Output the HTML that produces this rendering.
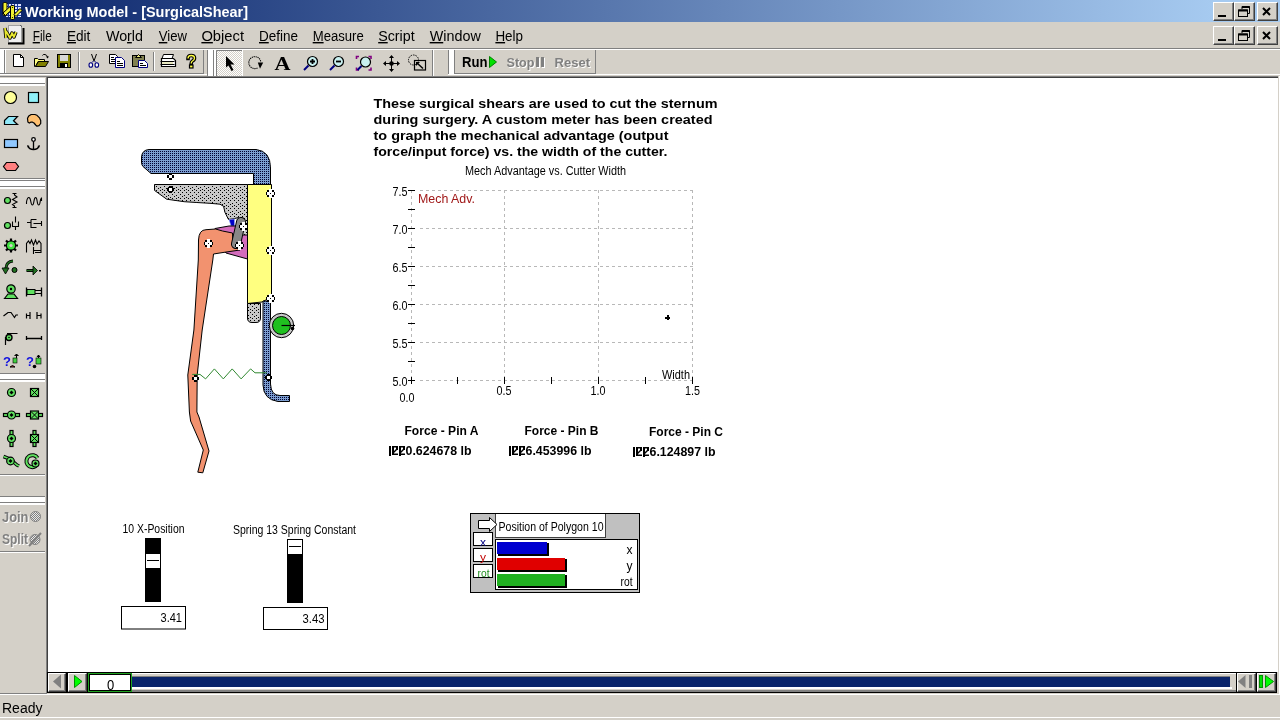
<!DOCTYPE html>
<html><head><meta charset="utf-8">
<style>
*{margin:0;padding:0;box-sizing:border-box}
html,body{width:1280px;height:720px;overflow:hidden;background:#d4d0c8;font-family:"Liberation Sans",sans-serif;color:#000}
.a{position:absolute}
.t{position:absolute;white-space:pre;line-height:1}
#title{left:0;top:0;width:1280px;height:22px;background:linear-gradient(to right,#0a246a 0px,#a6caf0 1212px,#a6caf0 1280px)}
.btn{position:absolute;background:#d4d0c8;border-top:1px solid #fff;border-left:1px solid #fff;border-right:1px solid #404040;border-bottom:1px solid #404040;box-shadow:inset -1px -1px 0 #808080}
.menu{position:absolute;top:29px;font-size:14px;line-height:14px;white-space:pre}
.u{text-decoration:underline}
.hl{position:absolute;height:1px}
.vl{position:absolute;width:1px}
</style></head><body><div style="position:absolute;left:0;top:0;width:1280px;height:720px;will-change:transform">

<!-- TITLE BAR -->
<div id="title" class="a"></div>
<svg class="a" style="left:0;top:0" width="24" height="22" viewBox="0 0 24 22">
  <rect x="6" y="4" width="15" height="13" fill="#e0e4ff"/>
  <g stroke="#1a3aa0" stroke-width="1"><path d="M6 6.5 H21 M6 9.5 H21 M6 12.5 H21 M6 15.5 H21 M8.5 4 V17 M11.5 4 V17 M14.5 4 V17 M17.5 4 V17"/></g>
  <g fill="#f0f030" stroke="#000" stroke-width="1" stroke-linejoin="round">
   <rect x="3" y="2.5" width="4" height="13" rx="1.2"/>
   <path d="M3 13 L9.5 7 L12 9.5 L5.5 15.5 Z"/>
   <rect x="10.5" y="5.5" width="4" height="14" rx="1.2"/>
   <path d="M14 14.5 L20 8.5 L22 10.5 L16 16.5 Z"/>
  </g>
  <circle cx="12.5" cy="7.5" r="0.6" fill="#000"/><circle cx="12.5" cy="17.5" r="0.6" fill="#000"/>
</svg>
<svg class="a" style="left:0;top:0" width="300" height="22"><text x="25" y="17" font-family="Liberation Sans" font-weight="bold" font-size="14" fill="#fff" textLength="223" lengthAdjust="spacingAndGlyphs">Working Model - [SurgicalShear]</text></svg>
<div class="btn" style="left:1213px;top:2px;width:21px;height:19px"></div>
<div class="btn" style="left:1234px;top:2px;width:21px;height:19px"></div>
<div class="btn" style="left:1257px;top:2px;width:21px;height:19px"></div>

<!-- title glyphs -->
<div class="a" style="left:1218px;top:15px;width:8px;height:2px;background:#000"></div>
<svg class="a" style="left:1237px;top:5px" width="14" height="13" viewBox="0 0 14 13">
 <path d="M5 1.5 H12.5 V8.5 H10.5" fill="none" stroke="#000" stroke-width="1"/><line x1="5" y1="2" x2="12.5" y2="2" stroke="#000" stroke-width="2"/>
 <path d="M5 1.5 V4" fill="none" stroke="#000" stroke-width="1"/>
 <rect x="1.5" y="5" width="9" height="6.5" fill="none" stroke="#000" stroke-width="1"/><line x1="1.5" y1="5.5" x2="10.5" y2="5.5" stroke="#000" stroke-width="2"/>
</svg>
<svg class="a" style="left:1260px;top:6px" width="14" height="12" viewBox="0 0 14 12">
 <path d="M3 2 L10 9 M10 2 L3 9" stroke="#000" stroke-width="2"/>
</svg>

<!-- MENU BAR -->
<svg class="a" style="left:0;top:22px" width="26" height="26" viewBox="0 22 26 26">
 <rect x="8.5" y="25.5" width="13" height="17" fill="#f0f0f0" stroke="#a0a0a0"/>
 <path d="M8 43.5 H23.5 V28" fill="none" stroke="#000" stroke-width="2"/>
 <path d="M20 25 L22 27" stroke="#606060" stroke-width="1"/>
 <path d="M5 28 L6 38 M6 31 L10 38 L12 33 L14 37 L16 32" fill="none" stroke="#000" stroke-width="3.4" stroke-linejoin="round"/>
 <path d="M5 28 L6 38 M6 31 L10 38 L12 33 L14 37 L16 32" fill="none" stroke="#e8e830" stroke-width="1.8" stroke-linejoin="round"/>
</svg>
<svg class="a" style="left:0;top:22px" width="560" height="26" viewBox="0 22 560 26"><g font-family="Liberation Sans" font-size="14" fill="#000">
 <text x="32.7" y="41" textLength="19.0" lengthAdjust="spacingAndGlyphs"><tspan text-decoration="underline">F</tspan>ile</text>
 <text x="66.9" y="41" textLength="23.5" lengthAdjust="spacingAndGlyphs"><tspan text-decoration="underline">E</tspan>dit</text>
 <text x="105.9" y="41" textLength="37.1" lengthAdjust="spacingAndGlyphs">Wo<tspan text-decoration="underline">r</tspan>ld</text>
 <text x="158.8" y="41" textLength="28.2" lengthAdjust="spacingAndGlyphs"><tspan text-decoration="underline">V</tspan>iew</text>
 <text x="201.4" y="41" textLength="42.6" lengthAdjust="spacingAndGlyphs"><tspan text-decoration="underline">O</tspan>bject</text>
 <text x="259.0" y="41" textLength="39.0" lengthAdjust="spacingAndGlyphs"><tspan text-decoration="underline">D</tspan>efine</text>
 <text x="312.7" y="41" textLength="51.0" lengthAdjust="spacingAndGlyphs"><tspan text-decoration="underline">M</tspan>easure</text>
 <text x="378.2" y="41" textLength="36.5" lengthAdjust="spacingAndGlyphs"><tspan text-decoration="underline">S</tspan>cript</text>
 <text x="429.7" y="41" textLength="51.1" lengthAdjust="spacingAndGlyphs"><tspan text-decoration="underline">W</tspan>indow</text>
 <text x="495.4" y="41" textLength="27.6" lengthAdjust="spacingAndGlyphs"><tspan text-decoration="underline">H</tspan>elp</text>
</g></svg>
<div class="btn" style="left:1213px;top:26px;width:21px;height:19px"></div>
<div class="btn" style="left:1234px;top:26px;width:21px;height:19px"></div>
<div class="btn" style="left:1257px;top:26px;width:21px;height:19px"></div>
<div class="a" style="left:1218px;top:39px;width:8px;height:2px;background:#000"></div>
<svg class="a" style="left:1237px;top:29px" width="14" height="13" viewBox="0 0 14 13">
 <path d="M5 1.5 H12.5 V8.5 H10.5" fill="none" stroke="#000" stroke-width="1"/><line x1="5" y1="2" x2="12.5" y2="2" stroke="#000" stroke-width="2"/>
 <path d="M5 1.5 V4" fill="none" stroke="#000" stroke-width="1"/>
 <rect x="1.5" y="5" width="9" height="6.5" fill="none" stroke="#000" stroke-width="1"/><line x1="1.5" y1="5.5" x2="10.5" y2="5.5" stroke="#000" stroke-width="2"/>
</svg>
<svg class="a" style="left:1260px;top:30px" width="14" height="12" viewBox="0 0 14 12">
 <path d="M3 2 L10 9 M10 2 L3 9" stroke="#000" stroke-width="2"/>
</svg>

<!-- separator lines below menu -->
<div class="hl" style="left:0;top:48px;width:1280px;background:#808080"></div>
<div class="hl" style="left:0;top:49px;width:1280px;background:#fff"></div>

<!-- TOOLBAR AREA -->
<div class="a" style="left:0;top:50px;width:4px;height:23px;background:#fff"></div>
<div class="vl" style="left:4px;top:50px;height:24px;background:#808080"></div>
<div class="vl" style="left:5px;top:50px;height:24px;background:#fff"></div>
<div class="vl" style="left:203px;top:50px;height:24px;background:#808080"></div>
<div class="hl" style="left:0;top:73px;width:204px;background:#808080"></div>
<div class="hl" style="left:0;top:74px;width:207px;background:#fff"></div>
<div class="vl" style="left:207px;top:50px;height:26px;background:#808080"></div>
<div class="a" style="left:208px;top:50px;width:5px;height:26px;background:#fff"></div>
<div class="vl" style="left:213px;top:50px;height:26px;background:#808080"></div>
<div class="a" style="left:214px;top:50px;width:2px;height:26px;background:#fff"></div>
<div class="vl" style="left:432px;top:50px;height:26px;background:#808080"></div>
<div class="vl" style="left:433px;top:50px;height:26px;background:#fff"></div>
<div class="hl" style="left:214px;top:76px;width:219px;background:#808080"></div>
<div class="vl" style="left:448px;top:50px;height:24px;background:#808080"></div>
<div class="a" style="left:449px;top:50px;width:5px;height:24px;background:#fff"></div>
<div class="vl" style="left:454px;top:50px;height:24px;background:#808080"></div>
<div class="vl" style="left:595px;top:50px;height:24px;background:#808080"></div>
<div class="hl" style="left:455px;top:73px;width:141px;background:#808080"></div>
<div class="hl" style="left:448px;top:74px;width:832px;background:#fff"></div>
<div class="hl" style="left:0;top:76px;width:1280px;background:#808080"></div>
<div class="hl" style="left:48px;top:77px;width:1230px;background:#404040"></div>

<!-- toolbar separators -->
<div class="vl" style="left:78px;top:52px;height:19px;background:#808080"></div>
<div class="vl" style="left:79px;top:52px;height:19px;background:#fff"></div>
<div class="vl" style="left:153px;top:52px;height:19px;background:#808080"></div>
<div class="vl" style="left:154px;top:52px;height:19px;background:#fff"></div>

<!-- TOOLBAR ICONS -->
<svg class="a" style="left:0;top:0" width="600" height="80" viewBox="0 0 600 80">
 <!-- new -->
 <path d="M13.5 54.5 H20.5 L23.5 57.5 V66.5 H13.5 Z" fill="#fff" stroke="#000" stroke-width="1"/>
 <path d="M20.5 54.5 V57.5 H23.5" fill="none" stroke="#000" stroke-width="1"/>
 <!-- open -->
 <path d="M34.5 58.5 H37.5 L38.5 59.5 H44.5 V61.5 H38 L35.5 66.5 H34.5 Z" fill="#ffff80" stroke="#000" stroke-width="1"/>
 <path d="M35.5 66.5 L38.5 61.5 H48.5 L45.5 66.5 Z" fill="#808000" stroke="#000" stroke-width="1"/>
 <path d="M42.5 55.5 Q43 54 45 54.5 Q47 55 47.5 57" fill="none" stroke="#000" stroke-width="1"/>
 <path d="M46 56.5 H49 L47.5 58.5 Z" fill="#000"/>
 <!-- save -->
 <rect x="57.5" y="54.5" width="13" height="13" fill="#808000" stroke="#000" stroke-width="1"/>
 <rect x="60" y="55" width="8" height="6" fill="#d8d8d8"/>
 <rect x="60" y="63" width="8" height="4" fill="#000"/><rect x="65" y="64" width="2" height="3" fill="#fff"/>
 <!-- cut -->
 <path d="M91.5 54 L94 61 M96.5 54 L94 61" fill="none" stroke="#000" stroke-width="1"/>
 <ellipse cx="90.8" cy="65" rx="1.8" ry="2.3" fill="#fff" stroke="#000080" stroke-width="1.1"/>
 <ellipse cx="96.8" cy="65" rx="1.8" ry="2.3" fill="#fff" stroke="#000080" stroke-width="1.1"/>
 <path d="M93.5 61 L92 62.5 M94.5 61 L96 62.5" stroke="#000080" stroke-width="1"/>
 <!-- copy -->
 <path d="M109.5 54.5 H115.5 L117.5 56.5 V63.5 H109.5 Z" fill="#fff" stroke="#000" stroke-width="1"/>
 <path d="M111 57.5 H114 M111 59.5 H115 M111 61.5 H115" stroke="#000" stroke-width="1"/>
 <path d="M115.5 57.5 H121.5 L124.5 60.5 V67.5 H115.5 Z" fill="#fff" stroke="#000080" stroke-width="1"/>
 <path d="M117 61.5 H120 M117 63.5 H123 M117 65.5 H123" stroke="#000" stroke-width="1"/>
 <!-- paste -->
 <rect x="132.5" y="55.5" width="12" height="11" fill="#808050" stroke="#000" stroke-width="1"/>
 <path d="M135.5 57.5 L138.5 54.5 L141.5 57.5 Z" fill="#e8e880" stroke="#000" stroke-width="1"/>
 <path d="M138.5 60.5 H144.5 L147.5 63.5 V67.5 H138.5 Z" fill="#fff" stroke="#000080" stroke-width="1"/>
 <path d="M140 63.5 H143 M140 65.5 H146" stroke="#000" stroke-width="1"/>
 <!-- print -->
 <path d="M163.5 54.5 H173.5 L172 58.5 H162 Z" fill="#fff" stroke="#000" stroke-width="1"/>
 <path d="M161.5 58.5 H173.5 L175.5 60.5 V66.5 H161.5 Z" fill="#fff" stroke="#000" stroke-width="1.2"/>
 <path d="M160.5 61.5 H174.5 M160.5 64.5 H174.5" stroke="#000" stroke-width="1"/>
 <rect x="162" y="62" width="11" height="2" fill="#e8e8c0"/>
 <!-- help -->
 <path d="M188 58.5 Q188 55.5 191.2 55.5 Q194.5 55.5 194.5 58 Q194.5 60 192.5 61 Q191.2 61.8 191.2 63.5" fill="none" stroke="#000" stroke-width="3.6" stroke-linecap="square"/>
 <path d="M188 58.5 Q188 55.5 191.2 55.5 Q194.5 55.5 194.5 58 Q194.5 60 192.5 61 Q191.2 61.8 191.2 63.5" fill="none" stroke="#ffff40" stroke-width="1.3"/>
 <rect x="189.5" y="65" width="3.5" height="3" fill="#ffff40" stroke="#000" stroke-width="1.2"/>

 <!-- pressed arrow button -->
 <defs><pattern id="dith" width="2" height="2" patternUnits="userSpaceOnUse"><rect width="2" height="2" fill="#fff"/><rect width="1" height="1" fill="#d4d0c8"/><rect x="1" y="1" width="1" height="1" fill="#d4d0c8"/></pattern></defs>
 <rect x="216" y="50" width="26" height="26" fill="url(#dith)"/>
 <path d="M216.5 76 V50.5 H242" fill="none" stroke="#808080" stroke-width="1"/>
 <path d="M242.5 50 V76" stroke="#fff" stroke-width="1"/>
 <path d="M226 56 V67.5 L228.5 65.5 L231.5 71 L233.5 70 L230.5 64.5 L234.5 64.5 Z" fill="#000"/>
 <!-- rotate -->
 <path d="M257.5 68 A6 6 0 1 1 260.8 62" fill="none" stroke="#000" stroke-width="1.1" stroke-dasharray="1.2,0.8"/>
 <path d="M257.8 62.5 H263.2 L260 68.8 Z" fill="#000"/>
 <!-- A -->
 <text x="274.5" y="70" font-family="Liberation Serif" font-weight="bold" font-size="19" textLength="16" lengthAdjust="spacingAndGlyphs">A</text>
 <!-- zoom in -->
 <circle cx="312.5" cy="61.5" r="5" fill="#c8f0f0" stroke="#000" stroke-width="1.2"/>
 <path d="M310 61.5 H315 M312.5 59 V64" stroke="#000" stroke-width="1.8"/>
 <line x1="308.5" y1="65.5" x2="304" y2="70" stroke="#000080" stroke-width="2"/>
 <!-- zoom out -->
 <circle cx="338.5" cy="61.5" r="5" fill="#c8f0f0" stroke="#000" stroke-width="1.2"/>
 <path d="M336 61.5 H341" stroke="#000" stroke-width="1.8"/>
 <line x1="334.5" y1="65.5" x2="330" y2="70" stroke="#000080" stroke-width="2"/>
 <!-- zoom fit -->
 <path d="M356.5 59 V56.5 H359 M368.5 56.5 H371 V59 M371 67.5 V70 H368.5 M359 70 H356.5 V67.5" fill="none" stroke="#800080" stroke-width="1.6"/>
 <circle cx="365.5" cy="62" r="5" fill="#c8f0f0" stroke="#000" stroke-width="1.2"/>
 <line x1="361.5" y1="66" x2="357.5" y2="70" stroke="#000080" stroke-width="2"/>
 <!-- move -->
 <circle cx="391.5" cy="63.5" r="2.3" fill="#000"/>
 <path d="M391.5 56 V71 M384 63.5 H399" stroke="#000" stroke-width="1"/>
 <path d="M391.5 55 L389 58 H394 Z M391.5 72 L389 69 H394 Z M383 63.5 L386 61 V66 Z M400 63.5 L397 61 V66 Z" fill="#000"/>
 <!-- select region -->
 <circle cx="413.5" cy="60" r="5" fill="none" stroke="#000" stroke-width="1" stroke-dasharray="1.5,1"/>
 <rect x="414.5" y="60.5" width="11" height="9.5" fill="none" stroke="#000" stroke-width="1.2"/>
 <path d="M417 63 L423 68.5" stroke="#000" stroke-width="1.5"/><path d="M416 62 H420 L416 66 Z" fill="#000"/>

 <!-- run stop reset -->
 <text x="462" y="66.7" font-family="Liberation Sans" font-weight="bold" font-size="14" textLength="25.5" lengthAdjust="spacingAndGlyphs">Run</text>
 <path d="M489.5 56.5 L496.5 62 L489.5 67.5 Z" fill="#00e000" stroke="#008000" stroke-width="1"/>
 <g font-family="Liberation Sans" font-weight="bold" font-size="13.5">
 <text x="507.5" y="67.7" fill="#fff" textLength="28" lengthAdjust="spacingAndGlyphs">Stop</text>
 <rect x="537" y="58" width="3" height="10" fill="#fff"/><rect x="542" y="58" width="3" height="10" fill="#fff"/>
 <text x="555.5" y="67.7" fill="#fff" textLength="35.5" lengthAdjust="spacingAndGlyphs">Reset</text>
 <text x="506.5" y="66.7" fill="#808080" textLength="28" lengthAdjust="spacingAndGlyphs">Stop</text>
 <rect x="536" y="57" width="3" height="10" fill="#808080"/><rect x="541" y="57" width="3" height="10" fill="#808080"/>
 <text x="554.5" y="66.7" fill="#808080" textLength="35.5" lengthAdjust="spacingAndGlyphs">Reset</text>
 </g>
</svg>

<!-- LEFT PALETTE -->
<div class="a" style="left:0;top:78px;width:45px;height:5px;background:#fff"></div>
<div class="hl" style="left:0;top:83px;width:45px;background:#808080"></div>
<div class="hl" style="left:0;top:84px;width:45px;height:2px;background:#fff"></div>
<div class="hl" style="left:0;top:178px;width:45px;background:#808080"></div>
<div class="hl" style="left:0;top:179px;width:45px;background:#fff"></div>
<div class="hl" style="left:0;top:180px;width:45px;background:#808080"></div>
<div class="a" style="left:0;top:181px;width:45px;height:5px;background:#fff"></div>
<div class="hl" style="left:0;top:186px;width:45px;background:#808080"></div>
<div class="a" style="left:0;top:187px;width:45px;height:2px;background:#fff"></div>
<div class="hl" style="left:0;top:373px;width:45px;background:#808080"></div>
<div class="a" style="left:0;top:374px;width:45px;height:5px;background:#fff"></div>
<div class="hl" style="left:0;top:379px;width:45px;background:#808080"></div>
<div class="a" style="left:0;top:380px;width:45px;height:2px;background:#fff"></div>
<div class="hl" style="left:0;top:474px;width:45px;background:#808080"></div>
<div class="hl" style="left:0;top:475px;width:45px;background:#fff"></div>
<div class="hl" style="left:0;top:496px;width:45px;background:#808080"></div>
<div class="a" style="left:0;top:497px;width:45px;height:5px;background:#fff"></div>
<div class="hl" style="left:0;top:502px;width:45px;background:#808080"></div>
<div class="a" style="left:0;top:503px;width:45px;height:2px;background:#fff"></div>
<div class="hl" style="left:0;top:551px;width:45px;background:#808080"></div>
<div class="hl" style="left:0;top:552px;width:45px;background:#fff"></div>
<div class="hl" style="left:0;top:693px;width:46px;background:#808080"></div>
<div class="vl" style="left:46px;top:77px;height:617px;background:#808080"></div>
<div class="vl" style="left:47px;top:77px;height:596px;background:#404040"></div>
<svg class="a" style="left:0;top:500px" width="46" height="52" viewBox="0 500 46 52"><g font-family="Liberation Sans" font-weight="bold" font-size="14">
<text x="3" y="523" fill="#fff" textLength="26.5" lengthAdjust="spacingAndGlyphs">Join</text>
<text x="3" y="545" fill="#fff" textLength="26" lengthAdjust="spacingAndGlyphs">Split</text>
<text x="2" y="522" fill="#808080" textLength="26.5" lengthAdjust="spacingAndGlyphs">Join</text>
<text x="2" y="544" fill="#808080" textLength="26" lengthAdjust="spacingAndGlyphs">Split</text></g></svg>

<!-- PALETTE ICONS -->
<svg class="a" style="left:0;top:78px" width="46" height="480" viewBox="0 78 46 480">
 <defs><pattern id="dg" width="2" height="2" patternUnits="userSpaceOnUse"><rect width="2" height="2" fill="#e8e8e8"/><rect width="1" height="1" fill="#808080"/><rect x="1" y="1" width="1" height="1" fill="#808080"/></pattern></defs>
 <g stroke="#000" stroke-width="1.2">
  <circle cx="10.5" cy="97.5" r="6" fill="#ffff99"/>
  <rect x="28.5" y="92.5" width="10" height="10" fill="#90f0f8"/>
  <path d="M4.5 120.5 L8.5 116.5 H17.5 L13.5 120.8 L17.5 124.5 H4.5 Z" fill="#90e8f8"/>
  <path d="M31.2 114.5 H34.8 L37 115.3 L39.5 117.8 L40.7 120.5 V123.5 L39 125.7 L37 126.2 L35.7 125 L34 123 L32.6 122.2 H30.7 L29.3 123.1 L27.9 122 L27.5 118.3 L28.7 116.1 Z" fill="#ffc070" stroke-linejoin="round"/>
  <rect x="4.5" y="139.5" width="13" height="8" fill="#90c8ff"/>
  <path d="M6.5 162.5 H15.5 L18.5 166.5 L15.5 170.5 H6.5 L3.5 166.5 Z" fill="#ff8080"/>
 </g>
 <circle cx="33.5" cy="139.5" r="1.8" fill="#fff" stroke="#000" stroke-width="1.3"/>
 <path d="M33.5 141.5 V149" stroke="#000" stroke-width="1.3"/>
 <path d="M28 146 Q29 149.5 33.5 149.5 Q38 149.5 39 146" fill="none" stroke="#000" stroke-width="1.3"/>
 <path d="M27 145 L29.5 146 L28 148 Z M40 145 L37.5 146 L39 148 Z" fill="#000"/>

 <!-- group 2 -->
 <g stroke="#000" stroke-width="1.1" fill="none">
  <path d="M12.5 193.5 H16.5 M14.5 193.5 V195 L17 197 L12.5 199.5 L17 202 L12.5 204.5 L14.5 206 V207.5 M12.5 207.5 H16.5"/>
  <path d="M26.5 204 V202 Q27.3 197.5 28.8 197.5 Q30.2 197.5 30.8 201.5 Q31.4 205 32.4 205 Q33.4 205 33.9 201.5 Q34.5 197.5 35.6 197.5 Q36.7 197.5 37.2 201.5 Q37.7 205 38.7 205 Q39.7 205 40.2 201.5 Q40.6 198.5 41.3 198.5 M41.5 197.5 V201"/>
  <path d="M15.5 216.5 V222.5 M12.5 221.5 V226.5 H18.5 V221.5 M15.5 226.5 V230"/>
  <path d="M27 222.5 H31 M31 219.5 H36.5 M31 219.5 V227.5 H36.5 M33.5 223.5 H41.5 M41.5 221 V226"/>
  <path d="M26.5 252.5 V243.5 L28.5 241 L30 243.5 L31.5 240 L33.5 245 L35.5 240 L37 244 L39 241 L41 243.5 V252.5 H35 M33.5 247 V254 M33.5 250.5 H41"/>
 </g>
 <circle cx="7.5" cy="200.5" r="3" fill="#60e060" stroke="#000" stroke-width="1.2"/>
 <circle cx="7.5" cy="225.5" r="3" fill="#60e060" stroke="#000" stroke-width="1.2"/>
 <g transform="translate(11 245.5)">
  <path d="M0 -7 V7 M-7 0 H7 M-5 -5 L5 5 M5 -5 L-5 5" stroke="#000" stroke-width="2.2"/>
  <circle r="4.6" fill="#40e040" stroke="#000" stroke-width="1.2"/>
  <circle r="1.6" fill="#d4d0c8"/>
 </g>
 <!-- motor -->
 <path d="M13 261 Q6.5 261.5 6 268 L5.5 271" fill="none" stroke="#000" stroke-width="3"/>
 <path d="M13 261 Q6.5 261.5 6 268 L5.5 271" fill="none" stroke="#207020" stroke-width="1.4"/>
 <path d="M2 268 H9 L5.5 274 Z" fill="#207020" stroke="#000" stroke-width="0.8"/>
 <circle cx="14.5" cy="270" r="2.5" fill="#207020" stroke="#000" stroke-width="1"/>
 <path d="M26.5 270.5 H34" stroke="#000" stroke-width="3"/><path d="M26.5 270.5 H34" stroke="#207020" stroke-width="1.2"/>
 <path d="M33 266 L37.5 270.5 L33 275 Z" fill="#207020" stroke="#000" stroke-width="0.8"/>
 <rect x="39" y="270" width="2" height="1.5" fill="#000"/>
 <!-- actuator -->
 <circle cx="11" cy="289" r="4.2" fill="#60e060" stroke="#000" stroke-width="1.2"/><circle cx="11" cy="289" r="1.2" fill="#000"/>
 <path d="M4.5 298.5 L8 294 H14 L17.5 298.5 Z" fill="#60e060" stroke="#000" stroke-width="1.2"/>
 <path d="M26.5 287.5 V296.5 M41.5 287.5 V296.5" stroke="#000" stroke-width="1.3"/>
 <rect x="27" y="289.5" width="8" height="5" fill="#60e060" stroke="#000" stroke-width="1"/>
 <path d="M35 290.5 H41 M35 293.5 H41" stroke="#000" stroke-width="1"/>
 <!-- rope / separators -->
 <path d="M3.5 316 L8 312.5 H11 L14.5 317.5 L16 315 H18" fill="none" stroke="#000" stroke-width="1.2"/>
 <path d="M26.5 313.5 V318.5 M26.5 315.5 H30 M30 312 V319 M37 312 V319 M37 315.5 H41 M41 313.5 V318.5" stroke="#000" stroke-width="1.2"/>
 <circle cx="9" cy="337.5" r="3" fill="#60e060" stroke="#000" stroke-width="1.4"/><circle cx="9" cy="337.5" r="0.8" fill="#000"/>
 <path d="M5.5 337 V345 M7 333.5 H17.5" stroke="#000" stroke-width="1.2"/>
 <path d="M26.5 336 V340 M26.5 338.5 H41.5 M41.5 336 V340" stroke="#000" stroke-width="1.3"/>
 <!-- ? icons -->
 <text x="3" y="366" font-family="Liberation Sans" font-weight="bold" font-size="13" fill="#1010e0">?</text>
 <text x="26" y="366" font-family="Liberation Sans" font-weight="bold" font-size="13" fill="#1010e0">?</text>
 <rect x="13" y="358" width="4" height="5" fill="#40d040" stroke="#000" stroke-width="0.6"/>
 <path d="M16.5 354 V358 M14.5 356 L16.5 354 L18.5 356" stroke="#000" stroke-width="1"/>
 <path d="M10 367 Q12.5 364 15 367 Z" fill="#c04040" stroke="#000" stroke-width="1"/>
 <rect x="36" y="358" width="5" height="6" fill="#40d040" stroke="#000" stroke-width="0.6"/>
 <path d="M38.5 355 V358 M37 357 L38.5 355 L40 357" stroke="#000" stroke-width="1"/>
 <circle cx="34.5" cy="366.5" r="1.8" fill="#000"/>

 <!-- group 3 -->
 <g stroke="#000" stroke-width="1.2">
  <g id="cd"><circle cx="11.5" cy="392.5" r="4" fill="#60e060"/><path d="M11.5 390.5 L13.5 392.5 L11.5 394.5 L9.5 392.5 Z" fill="#000" stroke="none"/></g>
  <rect x="30.5" y="388.5" width="8" height="8" fill="#60e060"/><path d="M31 389 L38 396 M38 389 L31 396" stroke-width="1"/>
  <rect x="3.5" y="413.5" width="16" height="3" fill="#60e060"/>
  <circle cx="11.5" cy="415" r="4" fill="#60e060"/><path d="M11.5 413 L13.5 415 L11.5 417 L9.5 415 Z" fill="#000" stroke="none"/>
  <rect x="26.5" y="413.5" width="16" height="3" fill="#60e060"/>
  <rect x="30.5" y="411" width="8" height="8" fill="#60e060"/><path d="M31 411.5 L38 418.5 M38 411.5 L31 418.5" stroke-width="1"/>
  <rect x="10" y="430.5" width="3" height="16" fill="#60e060"/>
  <circle cx="11.5" cy="438.5" r="4" fill="#60e060"/><path d="M11.5 436.5 L13.5 438.5 L11.5 440.5 L9.5 438.5 Z" fill="#000" stroke="none"/>
  <rect x="33" y="430.5" width="3" height="16" fill="#60e060"/>
  <rect x="30.5" y="434.5" width="8" height="8" fill="#60e060"/><path d="M31 435 L38 442 M38 435 L31 442" stroke-width="1"/>
 </g>
 <path d="M3.5 456.5 L10 459 L17 465 L19 466" fill="none" stroke="#000" stroke-width="3.5"/>
 <path d="M3.5 456.5 L10 459 L17 465 L19 466" fill="none" stroke="#60e060" stroke-width="1.5"/>
 <circle cx="10.5" cy="461" r="3.8" fill="#60e060" stroke="#000" stroke-width="1.2"/><path d="M10.5 459 L12.5 461 L10.5 463 L8.5 461 Z" fill="#000"/>
 <path d="M37.5 458 A6 6 0 1 0 36 466" fill="none" stroke="#000" stroke-width="4"/>
 <path d="M37.5 458 A6 6 0 1 0 36 466" fill="none" stroke="#60e060" stroke-width="2"/>
 <circle cx="35.5" cy="463.5" r="3.5" fill="#60e060" stroke="#000" stroke-width="1.2"/><path d="M35.5 461.5 L37.5 463.5 L35.5 465.5 L33.5 463.5 Z" fill="#000"/>

 <!-- join split icons -->
 <circle cx="35.5" cy="516.5" r="5" fill="url(#dg)" stroke="#808080" stroke-width="1"/>
 <circle cx="35" cy="539.5" r="5" fill="url(#dg)" stroke="#808080" stroke-width="1"/>
 <path d="M29 546 L41 533" stroke="#808080" stroke-width="2"/>
</svg>

<!-- CANVAS -->
<div class="a" style="left:48px;top:78px;width:1230px;height:594px;background:#fff"></div>
<div class="vl" style="left:1278px;top:76px;height:618px;background:#d4d0c8"></div>
<div class="vl" style="left:1279px;top:76px;height:618px;background:#fff"></div>

<!-- TIMELINE -->
<div class="hl" style="left:47px;top:672px;width:1230px;background:#000"></div>
<div class="hl" style="left:47px;top:692px;width:1230px;background:#000"></div>
<div class="vl" style="left:47px;top:672px;height:21px;background:#000"></div>
<div class="btn" style="left:48px;top:673px;width:18px;height:19px"></div>
<div class="vl" style="left:66px;top:672px;height:21px;background:#000"></div>
<div class="vl" style="left:67px;top:672px;height:21px;background:#000"></div>
<div class="btn" style="left:68px;top:673px;width:19px;height:19px"></div>
<div class="vl" style="left:87px;top:672px;height:21px;background:#000"></div>
<div class="a" style="left:88px;top:673px;width:44px;height:19px;border:1px solid #1fa31f;background:#000"></div>
<div class="a" style="left:90px;top:675px;width:40px;height:15px;background:#fff"></div>
<div class="t" style="left:107px;top:678px;font-size:13px;transform:scaleY(1.1);transform-origin:0 0">0</div>
<div class="a" style="left:132px;top:673px;width:1104px;height:19px;background:#d4d0c8"></div>
<div class="hl" style="left:132px;top:673px;width:1104px;background:#fff"></div>
<div class="hl" style="left:132px;top:676px;width:1098px;background:#808080"></div>
<div class="a" style="left:132px;top:677px;width:1098px;height:10px;background:#0a246a"></div>
<div class="a" style="left:132px;top:687px;width:1100px;height:2px;background:#fff"></div>
<div class="hl" style="left:132px;top:690px;width:1104px;height:2px;background:#808080"></div>
<div class="vl" style="left:1236px;top:672px;height:21px;background:#000"></div>
<div class="btn" style="left:1237px;top:673px;width:19px;height:19px"></div>
<div class="vl" style="left:1256px;top:672px;height:21px;background:#000"></div>
<div class="btn" style="left:1257px;top:673px;width:19px;height:19px"></div>
<div class="vl" style="left:1276px;top:672px;height:21px;background:#000"></div>
<svg class="a" style="left:48px;top:673px" width="40" height="19" viewBox="0 0 40 19">
 <path d="M5 8.5 L13 1.5 V15.5 Z" fill="#808080"/>
 <path d="M26.5 2.5 L34 8.5 L26.5 14.5 Z" fill="#00ff00" stroke="#009000" stroke-width="1"/>
</svg>
<svg class="a" style="left:1237px;top:673px" width="40" height="19" viewBox="0 0 40 19">
 <path d="M1 8.5 L8.5 2 V15 Z" fill="#808080"/><rect x="12" y="2" width="3" height="13" fill="#808080"/>
 <rect x="22.5" y="2.5" width="3" height="12" fill="#00e000" stroke="#009000"/>
 <path d="M28.5 2.5 L36.5 8.5 L28.5 14.5 Z" fill="#00ff00" stroke="#009000" stroke-width="1"/>
</svg>

<!-- STATUS BAR -->
<div class="hl" style="left:0;top:694px;width:1280px;background:#fff"></div>
<div class="t" style="left:2px;top:701px;font-size:14px">Ready</div>
<div class="hl" style="left:0;top:717px;width:1280px;background:#fff"></div>

<!-- CANVAS CONTENT -->
<svg class="a" style="left:0;top:0" width="1280" height="720" viewBox="0 0 1280 720">
<defs>
 <pattern id="pb" x="0" y="1" width="2" height="2" patternUnits="userSpaceOnUse"><rect width="2" height="2" fill="#7c9ed0"/><rect x="0" y="0" width="1" height="1" fill="#000030"/></pattern>
 <pattern id="pg" width="8" height="8" patternUnits="userSpaceOnUse"><rect width="8" height="8" fill="#c8c8c8"/>
  <g fill="#000"><rect x="2" y="0" width="1" height="1"/><rect x="6" y="0" width="1" height="1"/><rect x="4" y="2" width="1" height="1"/><rect x="0" y="3" width="1" height="1"/><rect x="6" y="4" width="1" height="1"/><rect x="2" y="5" width="1" height="1"/><rect x="0" y="6" width="1" height="1"/><rect x="4" y="6" width="1" height="1"/></g></pattern>
</defs>
<g stroke="#000" stroke-width="1" stroke-linejoin="round">
 <!-- blue top jaw -->
 <path d="M149 149.5 L256 149.5 Q270.5 151 270.5 168 L270.5 185 L253.5 185 L253.5 173.5 L151 173.5 L143 166.5 Q141.5 165 141.5 162 L141.5 157 Q142 150 149 149.5 Z" fill="url(#pb)"/>
 <!-- gray body -->
 <path d="M154.5 184.5 L247.5 184.5 L247.5 236 L240 236 L238.5 217.5 L234.6 218.5 L228.5 219.5 L224.9 212.2 L223.6 206.3 L220 204.2 L210 203.3 L196.7 202.5 L184.2 201.7 L166.7 199.2 L154.5 190.4 Z" fill="url(#pg)"/>
 <!-- blue notch -->
 <path d="M229 219.5 L234.5 219 L234.5 226 L231 226 Z" fill="#0000c8" stroke="#a0b0ff" stroke-width="0.6"/>
 <!-- pink -->
 <path d="M215 228.5 L229 226 L236 226 L236 235 L247.5 235 L247.5 259 L226 253 L220 245 Z" fill="#d36cbc"/>
 <!-- salmon -->
 <path d="M198.5 240 Q199 229.7 206 229.7 L215.6 229 L222.5 231 L232.5 233 L233 246 L240 250 L223 252.5 L213.5 254 L212.8 260 L202.2 330 L197.2 375 L196.9 412 L199 417 L209 451 L202.8 472.8 L197.8 472.2 L203.3 450 L190.6 421 L189.4 412 L187.8 375 L193.9 330 L198.3 260 Z" fill="#f2926f"/>
 <!-- yellow -->
 <path d="M247.5 184.5 L271.5 184.5 L271.5 297 L262 302 L247.5 303.5 Z" fill="#ffff80"/>
 <!-- small gray -->
 <path d="M247.5 303.5 L260.5 303.5 L260.5 318 Q260.5 322.5 256 322.5 L252 322.5 Q247.5 322.5 247.5 318 Z" fill="url(#pg)"/>
 <!-- blue hook -->
 <path d="M263 301 L270.5 301 L270.5 384 Q271 395.5 280 395.5 L289.5 395.5 L289.5 401.5 L278 401.5 Q263.5 399.5 263 385 Z" fill="url(#pb)"/>
 <!-- green wheel -->
 <circle cx="281.5" cy="325.5" r="12.2" fill="#c8c8c8"/>
 <circle cx="281.5" cy="325.5" r="9" fill="#20c020"/>
</g>
<!-- gray link -->
<line x1="241" y1="222" x2="236" y2="244" stroke="#000" stroke-width="10" stroke-linecap="round"/>
<line x1="241" y1="222" x2="236" y2="244" stroke="#888" stroke-width="8" stroke-linecap="round"/>
<line x1="281.5" y1="325.5" x2="295" y2="325.5" stroke="#000" stroke-width="1.2"/>
<circle cx="292.5" cy="328.5" r="1.8" fill="#000"/>
<!-- spring -->
<polyline points="192.2,374.4 200,374.4 205.6,378.9 214.4,368.9 223.3,378.9 232.2,368.9 241.1,378.9 250.6,368.9 255,372.8 266.7,372.8" fill="none" stroke="#308830" stroke-width="1"/>
<!-- pins -->
<defs>
 <g id="pin"><path d="M-3 -3h7v7h-7z M-1 -4h3v9h-3z M-4 -1h9v3h-9z" fill="#fff"/><path d="M-3 -3h2v2h-2z M2 -3h2v2h-2z M-3 2h2v2h-2z M2 2h2v2h-2z M-4 -1h1v3h-1z M4 -1h1v3h-1z M0 0h1v1h-1z" fill="#000"/></g>
</defs>
<g shape-rendering="crispEdges">
 <use href="#pin" x="270" y="193"/>
 <use href="#pin" x="243" y="226"/>
 <use href="#pin" x="208" y="243"/>
 <use href="#pin" x="239" y="245"/>
 <use href="#pin" x="270" y="250"/>
 <use href="#pin" x="270" y="298"/>
 <path d="M194 377h3v3h-3z M267 376h3v3h-3z" fill="#fff"/><path d="M192 377h2v3h-2z M197 377h2v3h-2z M194 375h3v2h-3z M194 380h3v2h-3z M265 376h2v3h-2z M270 376h2v3h-2z M267 374h3v2h-3z M267 379h3v2h-3z" fill="#000"/>
 <path d="M169 175h3v3h-3z" fill="#fff"/><path d="M167 175h2v3h-2z M172 175h2v3h-2z M169 178h3v2h-3z M169 173h3v2h-3z" fill="#000"/>
 <path d="M169 186h3v1h1v1h1v3h-1v1h-1v1h-3v-1h-1v-1h-1v-3h1v-1h1z" fill="#000"/><path d="M169 188h3v3h-3z" fill="#fff"/>
</g>

<!-- paragraph -->
<g font-family="Liberation Sans" font-weight="bold" font-size="13.5" fill="#000">
 <text x="373.5" y="107.5" textLength="344" lengthAdjust="spacingAndGlyphs">These surgical shears are used to cut the sternum</text>
 <text x="373.5" y="123.5" textLength="339" lengthAdjust="spacingAndGlyphs">during surgery. A custom meter has been created</text>
 <text x="373.5" y="139.5" textLength="295" lengthAdjust="spacingAndGlyphs">to graph the mechanical advantage (output</text>
 <text x="373.5" y="155.5" textLength="294" lengthAdjust="spacingAndGlyphs">force/input force) vs. the width of the cutter.</text>
</g>

<!-- chart -->
<g font-family="Liberation Sans" font-size="12.5" fill="#000">
 <text x="465" y="175" textLength="161" lengthAdjust="spacingAndGlyphs">Mech Advantage vs. Cutter Width</text>
</g>
<g stroke="#b8b8b8" stroke-width="1" stroke-dasharray="3,3" shape-rendering="crispEdges">
 <line x1="420" y1="190.5" x2="693" y2="190.5"/>
 <line x1="420" y1="228.5" x2="693" y2="228.5"/>
 <line x1="420" y1="266.5" x2="693" y2="266.5"/>
 <line x1="420" y1="304.5" x2="693" y2="304.5"/>
 <line x1="420" y1="342.5" x2="693" y2="342.5"/>
 <line x1="420" y1="380.5" x2="693" y2="380.5"/>
 <line x1="411.5" y1="190" x2="411.5" y2="381"/>
 <line x1="504.5" y1="190" x2="504.5" y2="381"/>
 <line x1="598.5" y1="190" x2="598.5" y2="381"/>
 <line x1="692.5" y1="190" x2="692.5" y2="381"/>
</g>
<g stroke="#000" stroke-width="1" shape-rendering="crispEdges">
 <line x1="408" y1="190.5" x2="415" y2="190.5"/><line x1="408" y1="209.5" x2="415" y2="209.5"/>
 <line x1="408" y1="228.5" x2="415" y2="228.5"/><line x1="408" y1="247.5" x2="415" y2="247.5"/>
 <line x1="408" y1="266.5" x2="415" y2="266.5"/><line x1="408" y1="285.5" x2="415" y2="285.5"/>
 <line x1="408" y1="304.5" x2="415" y2="304.5"/><line x1="408" y1="323.5" x2="415" y2="323.5"/>
 <line x1="408" y1="342.5" x2="415" y2="342.5"/><line x1="408" y1="361.5" x2="415" y2="361.5"/>
 <line x1="408" y1="380.5" x2="415" y2="380.5"/>
 <line x1="411.5" y1="377" x2="411.5" y2="384"/>
 <line x1="457.5" y1="377" x2="457.5" y2="384"/><line x1="504.5" y1="377" x2="504.5" y2="384"/>
 <line x1="551.5" y1="377" x2="551.5" y2="384"/><line x1="598.5" y1="377" x2="598.5" y2="384"/>
 <line x1="645.5" y1="377" x2="645.5" y2="384"/><line x1="692.5" y1="377" x2="692.5" y2="384"/>
</g>
<g font-family="Liberation Sans" font-size="12.5" fill="#000">
 <text x="392.5" y="195.5" textLength="15" lengthAdjust="spacingAndGlyphs">7.5</text>
 <text x="392.5" y="233.5" textLength="15" lengthAdjust="spacingAndGlyphs">7.0</text>
 <text x="392.5" y="271.5" textLength="15" lengthAdjust="spacingAndGlyphs">6.5</text>
 <text x="392.5" y="309.5" textLength="15" lengthAdjust="spacingAndGlyphs">6.0</text>
 <text x="392.5" y="347.5" textLength="15" lengthAdjust="spacingAndGlyphs">5.5</text>
 <text x="392.5" y="385.5" textLength="15" lengthAdjust="spacingAndGlyphs">5.0</text>
 <text x="399.5" y="402" textLength="15" lengthAdjust="spacingAndGlyphs">0.0</text>
 <text x="496.5" y="394.5" textLength="15" lengthAdjust="spacingAndGlyphs">0.5</text>
 <text x="590.5" y="394.5" textLength="15" lengthAdjust="spacingAndGlyphs">1.0</text>
 <text x="685" y="394.5" textLength="15" lengthAdjust="spacingAndGlyphs">1.5</text>
 <text x="662" y="378.5" textLength="28" lengthAdjust="spacingAndGlyphs">Width</text>
</g>
<text x="418" y="203" font-family="Liberation Sans" font-size="12.5" fill="#a01818" textLength="57" lengthAdjust="spacingAndGlyphs">Mech Adv.</text>
<g fill="#000" shape-rendering="crispEdges"><rect x="665" y="317" width="5" height="2"/><rect x="667" y="315" width="2" height="5"/></g>

<!-- force labels -->
<g font-family="Liberation Sans" font-weight="bold" font-size="12.5" fill="#000">
 <text x="404.5" y="434.7" textLength="74" lengthAdjust="spacingAndGlyphs">Force - Pin A</text>
 <text x="524.5" y="434.7" textLength="74" lengthAdjust="spacingAndGlyphs">Force - Pin B</text>
 <text x="649" y="435.7" textLength="74" lengthAdjust="spacingAndGlyphs">Force - Pin C</text>
 <text x="405.5" y="455" textLength="66" lengthAdjust="spacingAndGlyphs">0.624678 lb</text>
 <text x="525.5" y="455" textLength="66" lengthAdjust="spacingAndGlyphs">6.453996 lb</text>
 <text x="649.5" y="456" textLength="66" lengthAdjust="spacingAndGlyphs">6.124897 lb</text>
</g>
<g fill="#000"><rect x="389" y="446" width="2" height="10"/><rect x="392" y="446" width="2" height="9"/><rect x="392" y="446" width="6" height="1.5"/><rect x="396" y="446" width="2" height="4"/><path d="M398 449 L394 453 V451 L396 449 Z"/><rect x="392" y="453.5" width="6" height="1.5"/><rect x="399" y="446" width="2" height="10"/><rect x="399" y="446" width="6" height="1.5"/><rect x="403" y="446" width="2" height="4"/><path d="M405 449 L401 453 V451 L403 449 Z"/><rect x="399" y="453.5" width="6" height="1.5"/><rect x="509" y="446" width="2" height="10"/><rect x="512" y="446" width="2" height="9"/><rect x="512" y="446" width="6" height="1.5"/><rect x="516" y="446" width="2" height="4"/><path d="M518 449 L514 453 V451 L516 449 Z"/><rect x="512" y="453.5" width="6" height="1.5"/><rect x="519" y="446" width="2" height="10"/><rect x="519" y="446" width="6" height="1.5"/><rect x="523" y="446" width="2" height="4"/><path d="M525 449 L521 453 V451 L523 449 Z"/><rect x="519" y="453.5" width="6" height="1.5"/><rect x="633" y="447" width="2" height="10"/><rect x="636" y="447" width="2" height="9"/><rect x="636" y="447" width="6" height="1.5"/><rect x="640" y="447" width="2" height="4"/><path d="M642 450 L638 454 V452 L640 450 Z"/><rect x="636" y="454.5" width="6" height="1.5"/><rect x="643" y="447" width="2" height="10"/><rect x="643" y="447" width="6" height="1.5"/><rect x="647" y="447" width="2" height="4"/><path d="M649 450 L645 454 V452 L647 450 Z"/><rect x="643" y="454.5" width="6" height="1.5"/></g>

<!-- sliders -->
<g font-family="Liberation Sans" font-size="12.5" fill="#000">
 <text x="122.5" y="533" textLength="62" lengthAdjust="spacingAndGlyphs">10 X-Position</text>
 <text x="233" y="534" textLength="123" lengthAdjust="spacingAndGlyphs">Spring 13 Spring Constant</text>
</g>
<rect x="145" y="538" width="16" height="64" fill="#000"/>
<rect x="146" y="554" width="14" height="14" fill="#fff"/>
<line x1="147" y1="560.5" x2="159" y2="560.5" stroke="#000" stroke-width="1"/>
<rect x="287" y="539" width="16" height="64" fill="#000"/>
<rect x="288" y="540" width="14" height="14" fill="#fff"/>
<line x1="289" y1="546.5" x2="301" y2="546.5" stroke="#000" stroke-width="1"/>
<rect x="121.5" y="606.5" width="64" height="22.5" fill="#fff" stroke="#000" stroke-width="1"/>
<rect x="263.5" y="607.5" width="64" height="22" fill="#fff" stroke="#000" stroke-width="1"/>
<g font-family="Liberation Sans" font-size="12.5" fill="#000">
 <text x="160.5" y="622" textLength="21.5" lengthAdjust="spacingAndGlyphs">3.41</text>
 <text x="302.5" y="623" textLength="22" lengthAdjust="spacingAndGlyphs">3.43</text>
</g>

<!-- meter -->
<rect x="470.5" y="513.5" width="169" height="79" fill="#c0c0c0" stroke="#000" stroke-width="1"/>
<rect x="495.5" y="514" width="110" height="23.5" fill="#fff"/>
<line x1="495.5" y1="514" x2="495.5" y2="538" stroke="#404040"/>
<line x1="495" y1="537.5" x2="606" y2="537.5" stroke="#404040"/>
<line x1="605.5" y1="514" x2="605.5" y2="538" stroke="#404040"/>
<rect x="495.5" y="539.5" width="142" height="50" fill="#fff" stroke="#000" stroke-width="1"/>
<rect x="473.5" y="532.5" width="19" height="13" fill="#fff" stroke="#000"/>
<rect x="473.5" y="548.5" width="19" height="13" fill="#fff" stroke="#000"/>
<rect x="473.5" y="564.5" width="19" height="13" fill="#fff" stroke="#000"/>
<path d="M478.5 520.5 H489.5 V517.5 L497 524.5 L489.5 531.5 V528.5 H478.5 Z" fill="#fff" stroke="#000" stroke-width="1"/>
<g font-family="Liberation Sans" font-size="12" >
 <text x="498.5" y="531" textLength="105" lengthAdjust="spacingAndGlyphs" fill="#000">Position of Polygon 10</text>
 <text x="480" y="545.5" font-size="11" fill="#000080" textLength="6" lengthAdjust="spacingAndGlyphs">x</text>
 <text x="480" y="561" font-size="11" fill="#c00000" textLength="6" lengthAdjust="spacingAndGlyphs">y</text>
 <text x="477.5" y="577" font-size="11" fill="#209020" textLength="12" lengthAdjust="spacingAndGlyphs">rot</text>
 <text x="626.5" y="554" fill="#000">x</text>
 <text x="626.5" y="570" fill="#000">y</text>
 <text x="620.5" y="586" fill="#000" textLength="12" lengthAdjust="spacingAndGlyphs">rot</text>
</g>
<rect x="498" y="543" width="51" height="13" fill="#000"/><rect x="497" y="542" width="50" height="12" fill="#0000d0"/>
<rect x="498" y="559" width="69" height="13" fill="#000"/><rect x="497" y="558" width="68" height="12" fill="#e00000"/>
<rect x="498" y="575" width="69" height="13" fill="#000"/><rect x="497" y="574" width="68" height="12" fill="#20b020"/>
</svg>

</div></body></html>
